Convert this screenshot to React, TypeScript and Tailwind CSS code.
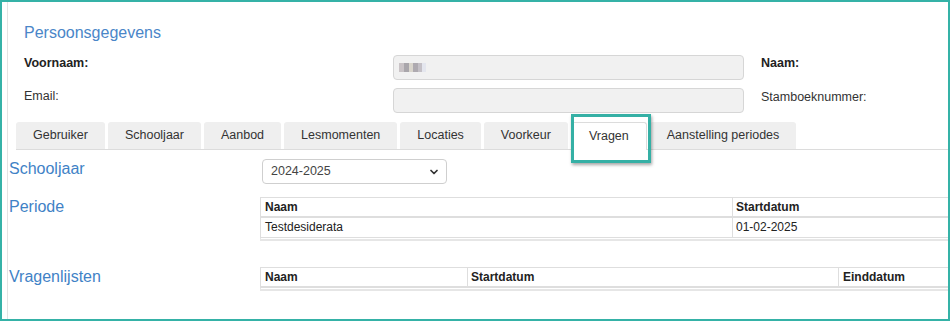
import { ChevronDown } from 'lucide-react';

const tabs = ['Gebruiker', 'Schooljaar', 'Aanbod', 'Lesmomenten', 'Locaties', 'Voorkeur', 'Vragen', 'Aanstelling periodes'];

function Label({ children }: { children: React.ReactNode }) {
    return <div className="w-[252px] shrink-0 pl-[1px] text-[16px] leading-[20px] text-[#3f82c6]">{children}</div>;
}

export default function App() {
    return (
        <div className="w-[951px] h-[322px] bg-white font-['Liberation_Sans',Arial,sans-serif] text-[#333]">
            <div className="relative w-[950px] h-[321px] border-2 border-[#35b2a7] overflow-hidden">
                <div className="ml-[5px] h-full border-l border-[#e3e3e3] flex flex-col">
                    {/* Persoonsgegevens */}
                    <div className="pl-4 pt-[21px]">
                        <h2 className="text-[16px] leading-[20px] text-[#4a86c8]">Persoonsgegevens</h2>
                        <div className="mt-[12px] flex items-start h-[25px]">
                            <div className="w-[369px] shrink-0 pt-[1px] text-[12.5px] leading-[15px] font-bold text-[#222]">Voornaam:</div>
                            <div className="w-[351px] h-[25px] rounded-[4px] border border-[#d6d6d6] bg-[#f1f1f1] flex items-center pl-[5px]">
                                <div className="flex blur-[0.6px]">
                                    <span className="w-[5px] h-[9px] bg-[#c9c3c6]" />
                                    <span className="w-[5px] h-[9px] bg-[#a9a6ab]" />
                                    <span className="w-[4px] h-[9px] bg-[#d9d5cc]" />
                                    <span className="w-[5px] h-[9px] bg-[#aeaab0]" />
                                    <span className="w-[4px] h-[9px] bg-[#c4c0c6]" />
                                    <span className="w-[4px] h-[9px] bg-[#e4e6ee]" />
                                </div>
                            </div>
                            <div className="ml-[17px] pt-[1px] text-[12.5px] leading-[15px] font-bold text-[#222]">Naam:</div>
                        </div>
                        <div className="mt-[8px] flex items-start h-[25px]">
                            <div className="w-[369px] shrink-0 pt-[1px] text-[12.5px] leading-[15px]">Email:</div>
                            <div className="w-[351px] h-[25px] rounded-[4px] border border-[#d6d6d6] bg-[#f1f1f1]" />
                            <div className="ml-[17px] pt-[2px] text-[12.5px] leading-[15px]">Stamboeknummer:</div>
                        </div>
                    </div>

                    {/* Tabs */}
                    <div className="mt-[9px] ml-2 flex items-end gap-[3px] border-b border-[#dcdcdc] h-[28px]">
                        {tabs.map(t => (
                            <div
                                key={t}
                                className={`h-[27px] px-[17px] flex items-center text-[12.5px] rounded-t-[3px] ${t === 'Vragen' ? 'bg-white border border-b-0 border-[#dcdcdc] -mb-px h-[28px] pb-px' : 'bg-[#efefef]'}`}
                            >
                                {t}
                            </div>
                        ))}
                    </div>

                    {/* Vragen content */}
                    <div className="mt-[9px] flex items-start">
                        <Label>Schooljaar</Label>
                        <div className="ml-[2px] w-[185px] h-[25px] rounded-[4px] border border-[#cfcfcf] flex items-center justify-between pl-[8px] pr-[6px] text-[12.5px] text-[#444]">
                            <span>2024-2025</span>
                            <ChevronDown className="w-[12px] h-[12px] text-[#333]" strokeWidth={3.5} />
                        </div>
                    </div>

                    <div className="mt-[13px] flex items-start">
                        <Label>Periode</Label>
                        <div className="w-[720px] shrink-0 text-[12px] text-[#222]">
                            <div className="flex border-t border-l border-[#dedede] border-b-2 h-[21px]">
                                <div className="w-[471px] pl-[4px] font-bold leading-[18px]">Naam</div>
                                <div className="flex-1 border-l border-[#dedede] pl-[3px] font-bold leading-[18px]">Startdatum</div>
                            </div>
                            <div className="flex border-l border-b border-[#dedede] h-[20px]">
                                <div className="w-[471px] pl-[4px] leading-[18px]">Testdesiderata</div>
                                <div className="flex-1 border-l border-[#dedede] pl-[3px] leading-[18px]">01-02-2025</div>
                            </div>
                            <div className="h-[3px] border-b-2 border-l border-[#e6e6e6]" />
                        </div>
                    </div>

                    <div className="mt-[26px] flex items-start">
                        <Label>Vragenlijsten</Label>
                        <div className="w-[720px] shrink-0 text-[12px] text-[#222]">
                            <div className="flex border-t border-l border-[#dedede] border-b-2 h-[21px]">
                                <div className="w-[206px] pl-[4px] font-bold leading-[18px]">Naam</div>
                                <div className="w-[371px] border-l border-[#dedede] pl-[3px] font-bold leading-[18px]">Startdatum</div>
                                <div className="flex-1 border-l border-[#dedede] pl-[4px] font-bold leading-[18px]">Einddatum</div>
                            </div>
                            <div className="h-[3px] border-b-2 border-l border-[#e6e6e6]" />
                        </div>
                    </div>
                </div>

                {/* highlight around active tab */}
                <div className="absolute left-[569px] top-[112px] w-[80px] h-[49px] border-[3px] border-[#35b0a5] shadow-[1px_2px_3px_rgba(0,0,0,0.35)]" />
            </div>
        </div>
    );
}
